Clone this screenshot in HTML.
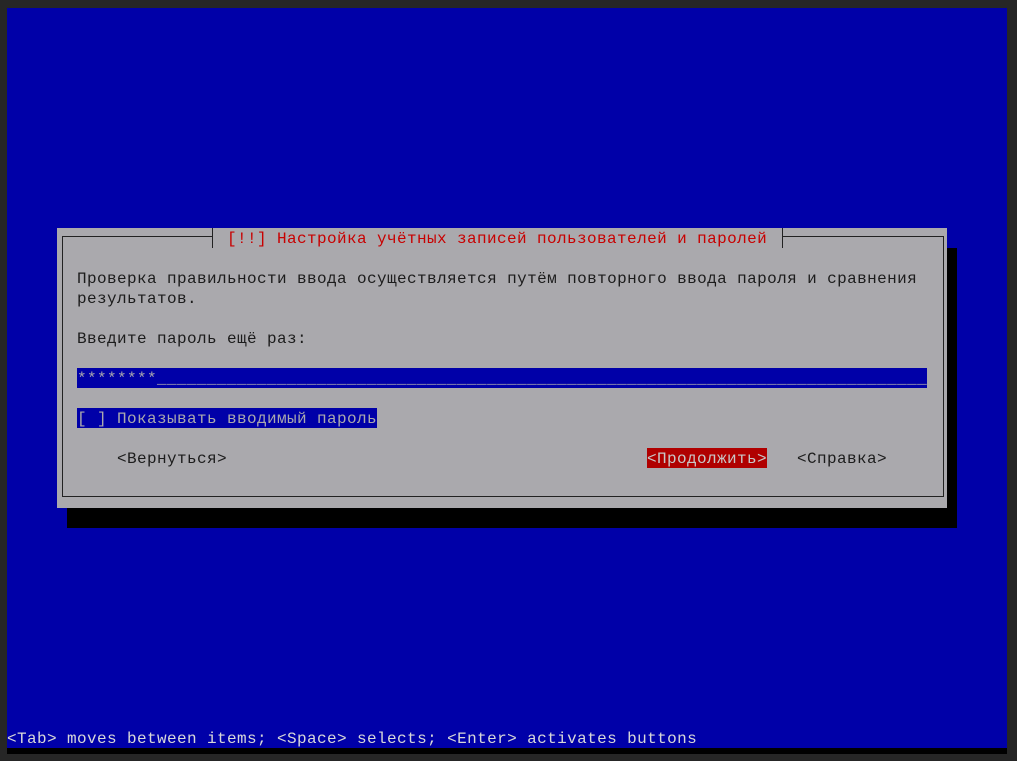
<!DOCTYPE html>
<html><head><meta charset="utf-8"><style>
body{margin:0;width:1017px;height:761px;background:#262626;overflow:hidden;position:relative;font-family:"Liberation Mono","DejaVu Sans Mono",monospace;font-size:16px;letter-spacing:0.4px;}
div{position:absolute;white-space:pre;line-height:20px;}
.t{color:#1c1c1c;}
</style></head><body>
<div style="left:7px;top:8px;width:1000px;height:740px;background:#0000a8"></div>
<div style="left:7px;top:748px;width:1000px;height:6px;background:#000"></div>
<div style="left:67px;top:248px;width:890px;height:280px;background:#000"></div>
<div style="left:57px;top:228px;width:890px;height:280px;background:#aaa9ad"></div>
<div style="left:62px;top:236px;width:880px;height:259px;border:1px solid #222"></div>
<div style="left:213px;top:228px;width:569px;height:20px;background:#aaa9ad"></div>
<div style="left:212px;top:228px;width:1px;height:20px;background:#222"></div>
<div style="left:782px;top:228px;width:1px;height:20px;background:#222"></div>
<div style="left:227px;top:229px;color:#c80000">[!!] Настройка учётных записей пользователей и паролей</div>
<div class="t" style="left:77px;top:269px">Проверка правильности ввода осуществляется путём повторного ввода пароля и сравнения
результатов.</div>
<div class="t" style="left:77px;top:329px">Введите пароль ещё раз:</div>
<div style="left:77px;top:368px;width:850px;height:20px;background:#0000a8;color:#aaa9ad;overflow:hidden"><span style="position:relative;top:1px">********_____________________________________________________________________________</span></div>
<div style="left:77px;top:408px;width:300px;height:20px;background:#0000a8;color:#aaa9ad"><span style="position:relative;top:1px">[ ] Показывать вводимый пароль</span></div>
<div class="t" style="left:117px;top:449px">&lt;Вернуться&gt;</div>
<div style="left:647px;top:448px;width:120px;height:20px;background:#b00000;color:#c8c8c8"><span style="position:relative;top:1px">&lt;Продолжить&gt;</span></div>
<div class="t" style="left:797px;top:449px">&lt;Справка&gt;</div>
<div style="left:7px;top:729px;color:#d8d8d8">&lt;Tab&gt; moves between items; &lt;Space&gt; selects; &lt;Enter&gt; activates buttons</div>
</body></html>
